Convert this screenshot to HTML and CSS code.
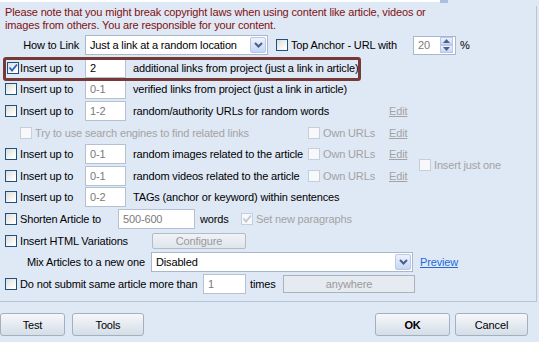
FILE: index.html
```html
<!DOCTYPE html>
<html lang="en">
<head>
    <meta charset="UTF-8">
    <title>Article Options</title>
    <link rel="stylesheet" href="styles.css">
</head>
<body>

<div class="top-field"><span></span></div>

<div class="group">
    <p class="note">Please note that you might break copyright laws when using content like article, videos or<br>images from others. You are responsible for your content.</p>

    <div class="row link-row">
        <span class="link-label">How to Link</span>
        <div class="select sel-link">
            <span class="sel-text">Just a link at a random location</span>
            <span class="drop"><svg width="9" height="6" viewBox="0 0 9 6"><path d="M1 1 L4.5 4.5 L8 1" fill="none" stroke="#4d5f82" stroke-width="2"/></svg></span>
        </div>
        <span class="cb"></span><span class="anchor-text">Top Anchor - URL with</span>
        <div class="spin">
            <span>20</span>
            <span class="spin-btns">
                <span class="spin-btn"><svg width="7" height="4" viewBox="0 0 7 4"><path d="M0 4 L3.5 0 L7 4 Z" fill="#4d5f82"/></svg></span>
                <span class="spin-btn"><svg width="7" height="4" viewBox="0 0 7 4"><path d="M0 0 L3.5 4 L7 0 Z" fill="#4d5f82"/></svg></span>
            </span>
        </div>
        <span class="pct">%</span>
    </div>

    <div class="row hl">
        <span class="cb on"><svg width="10" height="10" viewBox="0 0 10 10"><path d="M1.5 4.5 L4 7.5 L9 1.5" fill="none" stroke="#2b5fc7" stroke-width="1.8"/></svg></span>
        <span class="lbl">Insert up to</span>
        <span class="field num dark">2</span>
        <span>additional links from project (just a link in article)</span>
    </div>

    <div class="row">
        <span class="cb"></span>
        <span class="lbl">Insert up to</span>
        <span class="field num">0-1</span>
        <span>verified links from project (just a link in article)</span>
    </div>

    <div class="row">
        <span class="cb"></span>
        <span class="lbl">Insert up to</span>
        <span class="field num">1-2</span>
        <span class="desc wide">random/authority URLs for random words</span>
        <a class="edit">Edit</a>
    </div>

    <div class="row try-row">
        <span class="cb off"></span>
        <span class="try-text">Try to use search engines to find related links</span>
        <span class="own"><span class="cb off"></span><span class="muted">Own URLs</span></span>
        <a class="edit">Edit</a>
    </div>

    <div class="pair">
        <div class="pair-rows">
            <div class="row">
                <span class="cb"></span>
                <span class="lbl">Insert up to</span>
                <span class="field num">0-1</span>
                <span class="desc">random images related to the article</span>
                <span class="own"><span class="cb off"></span><span class="muted">Own URLs</span></span>
                <a class="edit">Edit</a>
            </div>
            <div class="row">
                <span class="cb"></span>
                <span class="lbl">Insert up to</span>
                <span class="field num">0-1</span>
                <span class="desc">random videos related to the article</span>
                <span class="own"><span class="cb off"></span><span class="muted">Own URLs</span></span>
                <a class="edit">Edit</a>
            </div>
        </div>
        <span class="cb off"></span><span class="muted">Insert just one</span>
    </div>

    <div class="row">
        <span class="cb"></span>
        <span class="lbl">Insert up to</span>
        <span class="field num">0-2</span>
        <span>TAGs (anchor or keyword) within sentences</span>
    </div>

    <div class="row">
        <span class="cb"></span>
        <span class="lbl shorten">Shorten Article to</span>
        <span class="field words-field">500-600</span>
        <span class="words">words</span>
        <span class="cb off"><svg width="10" height="10" viewBox="0 0 10 10"><path d="M1.5 4.5 L4 7.5 L9 1.5" fill="none" stroke="#c2c8d0" stroke-width="1.8"/></svg></span>
        <span class="muted">Set new paragraphs</span>
    </div>

    <div class="row">
        <span class="cb"></span>
        <span class="lbl html-var">Insert HTML Variations</span>
        <span class="btn-flat configure">Configure</span>
    </div>

    <div class="row mix-row">
        <span class="mix-label">Mix Articles to a new one</span>
        <div class="select sel-mix">
            <span class="sel-text">Disabled</span>
            <span class="drop"><svg width="9" height="6" viewBox="0 0 9 6"><path d="M1 1 L4.5 4.5 L8 1" fill="none" stroke="#4d5f82" stroke-width="2"/></svg></span>
        </div>
        <a class="preview">Preview</a>
    </div>

    <div class="row">
        <span class="cb"></span>
        <span class="lbl submit">Do not submit same article more than</span>
        <span class="field times-field">1</span>
        <span class="times">times</span>
        <span class="btn-flat anywhere">anywhere</span>
    </div>
</div>

<div class="buttons">
    <span class="btn test">Test</span>
    <span class="btn tools">Tools</span>
    <span class="btn ok">OK</span>
    <span class="btn cancel">Cancel</span>
</div>

</body>
</html>
```

FILE: styles.css
```css
body {
    margin: 0;
    width: 539px;
    height: 342px;
    overflow: hidden;
    background-color: #dfe8f5;
    font: 11px "Liberation Sans", Arial, sans-serif;
    letter-spacing: -0.15px;
    color: #000;
}

.top-field {
    display: flex;
    justify-content: flex-end;
    width: 448px;
    height: 2px;
    background-color: #fff;
}

.top-field span {
    width: 8px;
    height: 3px;
    background-color: #a9bfe2;
}

.group {
    width: 537px;
    height: 296px;
    box-sizing: border-box;
    border-right: 1px solid #b6c4d6;
    border-bottom: 1px solid #b6c4d6;
}

.note {
    margin: 4px 0 0 5px;
    line-height: 13px;
    color: #7f1010;
}

.row {
    display: flex;
    align-items: center;
    height: 21.6px;
    padding-left: 5px;
    white-space: nowrap;
}

.link-row {
    height: 22px;
    margin-top: 2px;
    margin-bottom: 1px;
    padding-left: 0;
}

.link-label {
    width: 79px;
    margin-right: 6px;
    text-align: right;
}

.select {
    display: flex;
    align-items: center;
    justify-content: space-between;
    height: 20px;
    box-sizing: border-box;
    border: 1px solid #a9b8c9;
    background-color: #fff;
    padding: 0 1px 0 4px;
}

.sel-link {
    width: 183px;
    margin-right: 8px;
}

.drop {
    display: flex;
    align-items: center;
    justify-content: center;
    width: 16px;
    height: 16px;
    box-sizing: border-box;
    border: 1px solid #b7c8ea;
    border-radius: 2px;
    background: linear-gradient(#edf2fd, #c6d6f7);
}

.anchor-text {
    width: 122px;
}

.spin {
    display: flex;
    align-items: center;
    justify-content: space-between;
    width: 43px;
    height: 19px;
    box-sizing: border-box;
    border: 1px solid #a9b8c9;
    background-color: #fff;
    padding: 0 2px 0 4px;
    color: #7a7a7a;
}

.spin-btns {
    display: flex;
    flex-direction: column;
}

.spin-btn {
    display: flex;
    align-items: center;
    justify-content: center;
    width: 13px;
    height: 8px;
    box-sizing: border-box;
    border: 1px solid #b7c8ea;
    background: linear-gradient(#edf2fd, #c6d6f7);
}

.pct {
    margin-left: 4px;
}

.cb {
    display: flex;
    align-items: center;
    justify-content: center;
    flex: none;
    width: 12px;
    height: 12px;
    box-sizing: border-box;
    border: 1px solid #1c5180;
    background: linear-gradient(135deg, #dcdcd7, #fff 85%);
    margin-right: 3px;
}

.cb.off {
    border-color: #c6ceda;
    background: #f6f8fb;
}

.hl {
    position: relative;
    padding-left: 7px;
}

.hl .cb {
    margin-right: 1px;
}

.hl::after {
    content: "";
    position: absolute;
    left: 3px;
    top: 0;
    width: 358px;
    height: 24px;
    box-sizing: border-box;
    border: 3px solid #773838;
    border-radius: 3px;
}

.lbl {
    width: 65px;
}

.field {
    display: flex;
    align-items: center;
    height: 20px;
    box-sizing: border-box;
    border: 1px solid #b3c1d1;
    background-color: #fff;
    padding-left: 4px;
    color: #7a7a7a;
}

.field.dark {
    color: #000;
}

.num {
    width: 41px;
    margin-right: 7px;
}

.desc {
    width: 175px;
}

.desc.wide {
    width: 256px;
}

.try-row {
    padding-left: 20px;
}

.try-text {
    width: 273px;
    color: #a3a3a3;
}

.own {
    display: flex;
    align-items: center;
    width: 81px;
}

.muted {
    color: #a3a3a3;
}

.edit {
    color: #a3a3a3;
    text-decoration: underline;
}

.pair {
    display: flex;
    align-items: center;
}

.pair-rows {
    width: 419px;
}

.shorten {
    width: 98px;
}

.words-field {
    width: 77px;
    margin-right: 5px;
}

.words {
    width: 41px;
}

.html-var {
    width: 132px;
}

.btn-flat {
    display: flex;
    align-items: center;
    justify-content: center;
    box-sizing: border-box;
    border: 1px solid #b2bcc8;
    border-radius: 2px;
    color: #9a9a9a;
}

.configure {
    width: 94px;
    height: 16px;
    background: linear-gradient(#f0f3f7, #dfe5ec);
}

.mix-row {
    padding-left: 27px;
}

.mix-label {
    width: 124px;
}

.sel-mix {
    width: 262px;
    margin-right: 7px;
}

.preview {
    color: #1f6bd6;
    text-decoration: underline;
}

.submit {
    width: 183px;
}

.times-field {
    width: 43px;
    margin-right: 4px;
}

.times {
    width: 33px;
}

.anywhere {
    width: 132px;
    height: 18px;
    background-color: #e6ebf1;
    border-radius: 0;
    border-color: #a9b2bd;
}

.buttons {
    display: flex;
    margin-top: 11px;
}

.btn {
    display: flex;
    align-items: center;
    justify-content: center;
    height: 23px;
    box-sizing: border-box;
    border: 1px solid #a4b0c0;
    border-radius: 3px;
    background: linear-gradient(#f5f8fb, #d5dde7);
}

.test {
    width: 65px;
}

.tools {
    width: 72px;
    margin-left: 7px;
}

.ok {
    width: 75px;
    margin-left: auto;
    font-weight: bold;
}

.cancel {
    width: 73px;
    margin-left: 5px;
    margin-right: 11px;
}
```
